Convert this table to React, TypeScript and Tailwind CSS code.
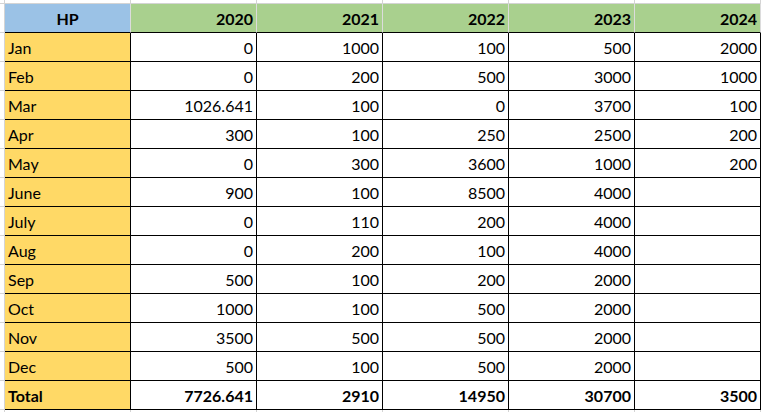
import React from 'react';

const years = ['2020', '2021', '2022', '2023', '2024'];

const rows: [string, string[]][] = [
  ['Jan', ['0', '1000', '100', '500', '2000']],
  ['Feb', ['0', '200', '500', '3000', '1000']],
  ['Mar', ['1026.641', '100', '0', '3700', '100']],
  ['Apr', ['300', '100', '250', '2500', '200']],
  ['May', ['0', '300', '3600', '1000', '200']],
  ['June', ['900', '100', '8500', '4000', '']],
  ['July', ['0', '110', '200', '4000', '']],
  ['Aug', ['0', '200', '100', '4000', '']],
  ['Sep', ['500', '100', '200', '2000', '']],
  ['Oct', ['1000', '100', '500', '2000', '']],
  ['Nov', ['3500', '500', '500', '2000', '']],
  ['Dec', ['500', '100', '500', '2000', '']],
];

const totals = ['7726.641', '2910', '14950', '30700', '3500'];

// blank gridline strip above / below the table
const GridStrip: React.FC<{ h: string; bottom?: boolean }> = ({ h, bottom }) => (
  <div className={`flex ${h}`}>
    <div className={`w-[5px] border-r border-[#d4d4d4] ${bottom ? '' : 'border-b'}`} />
    {Array.from({ length: 6 }).map((_, i) => (
      <div key={i} className={`w-[126px] border-r border-[#d4d4d4] ${bottom ? '' : 'border-b'}`} />
    ))}
  </div>
);

const App: React.FC = () => {
  return (
    <div
      className="w-[762px] h-[412px] bg-white overflow-hidden text-black text-[16px] leading-none"
      style={{ fontFamily: 'Lato, "Open Sans", sans-serif' }}
    >
      <GridStrip h="h-[4px]" />

      {/* header */}
      <div className="flex h-[29px]">
        <div className="w-[5px] border-r border-b border-[#d4d4d4]" />
        <div className="w-[126px] bg-[#9bc2e6] border-b border-b-black border-r border-r-[#dcdcdc] flex items-end justify-center pb-[5px] font-bold">
          HP
        </div>
        {years.map((y) => (
          <div
            key={y}
            className="w-[126px] bg-[#a9d08e] border-b border-b-black border-r border-r-[#dcdcdc] flex items-end justify-end px-[3px] pb-[5px] font-bold"
          >
            {y}
          </div>
        ))}
      </div>

      {rows.map(([month, vals]) => (
        <div key={month} className="flex h-[29px]">
          <div className="w-[5px] border-r border-b border-[#d4d4d4]" />
          <div className="w-[126px] bg-[#ffd966] border-b border-r border-black flex items-end px-[3px] pb-[5px]">
            {month}
          </div>
          {vals.map((v, i) => (
            <div
              key={i}
              className="w-[126px] border-b border-r border-black flex items-end justify-end px-[3px] pb-[5px]"
            >
              {v}
            </div>
          ))}
        </div>
      ))}

      {/* total */}
      <div className="flex h-[29px] font-bold">
        <div className="w-[5px] border-r border-b border-[#d4d4d4]" />
        <div className="w-[126px] bg-[#ffd966] border-b border-r border-black flex items-end px-[3px] pb-[5px]">
          Total
        </div>
        {totals.map((v, i) => (
          <div
            key={i}
            className="w-[126px] border-b border-r border-black flex items-end justify-end px-[3px] pb-[5px]"
          >
            {v}
          </div>
        ))}
      </div>

      <GridStrip h="h-[3px]" bottom />
    </div>
  );
};

export default App;
